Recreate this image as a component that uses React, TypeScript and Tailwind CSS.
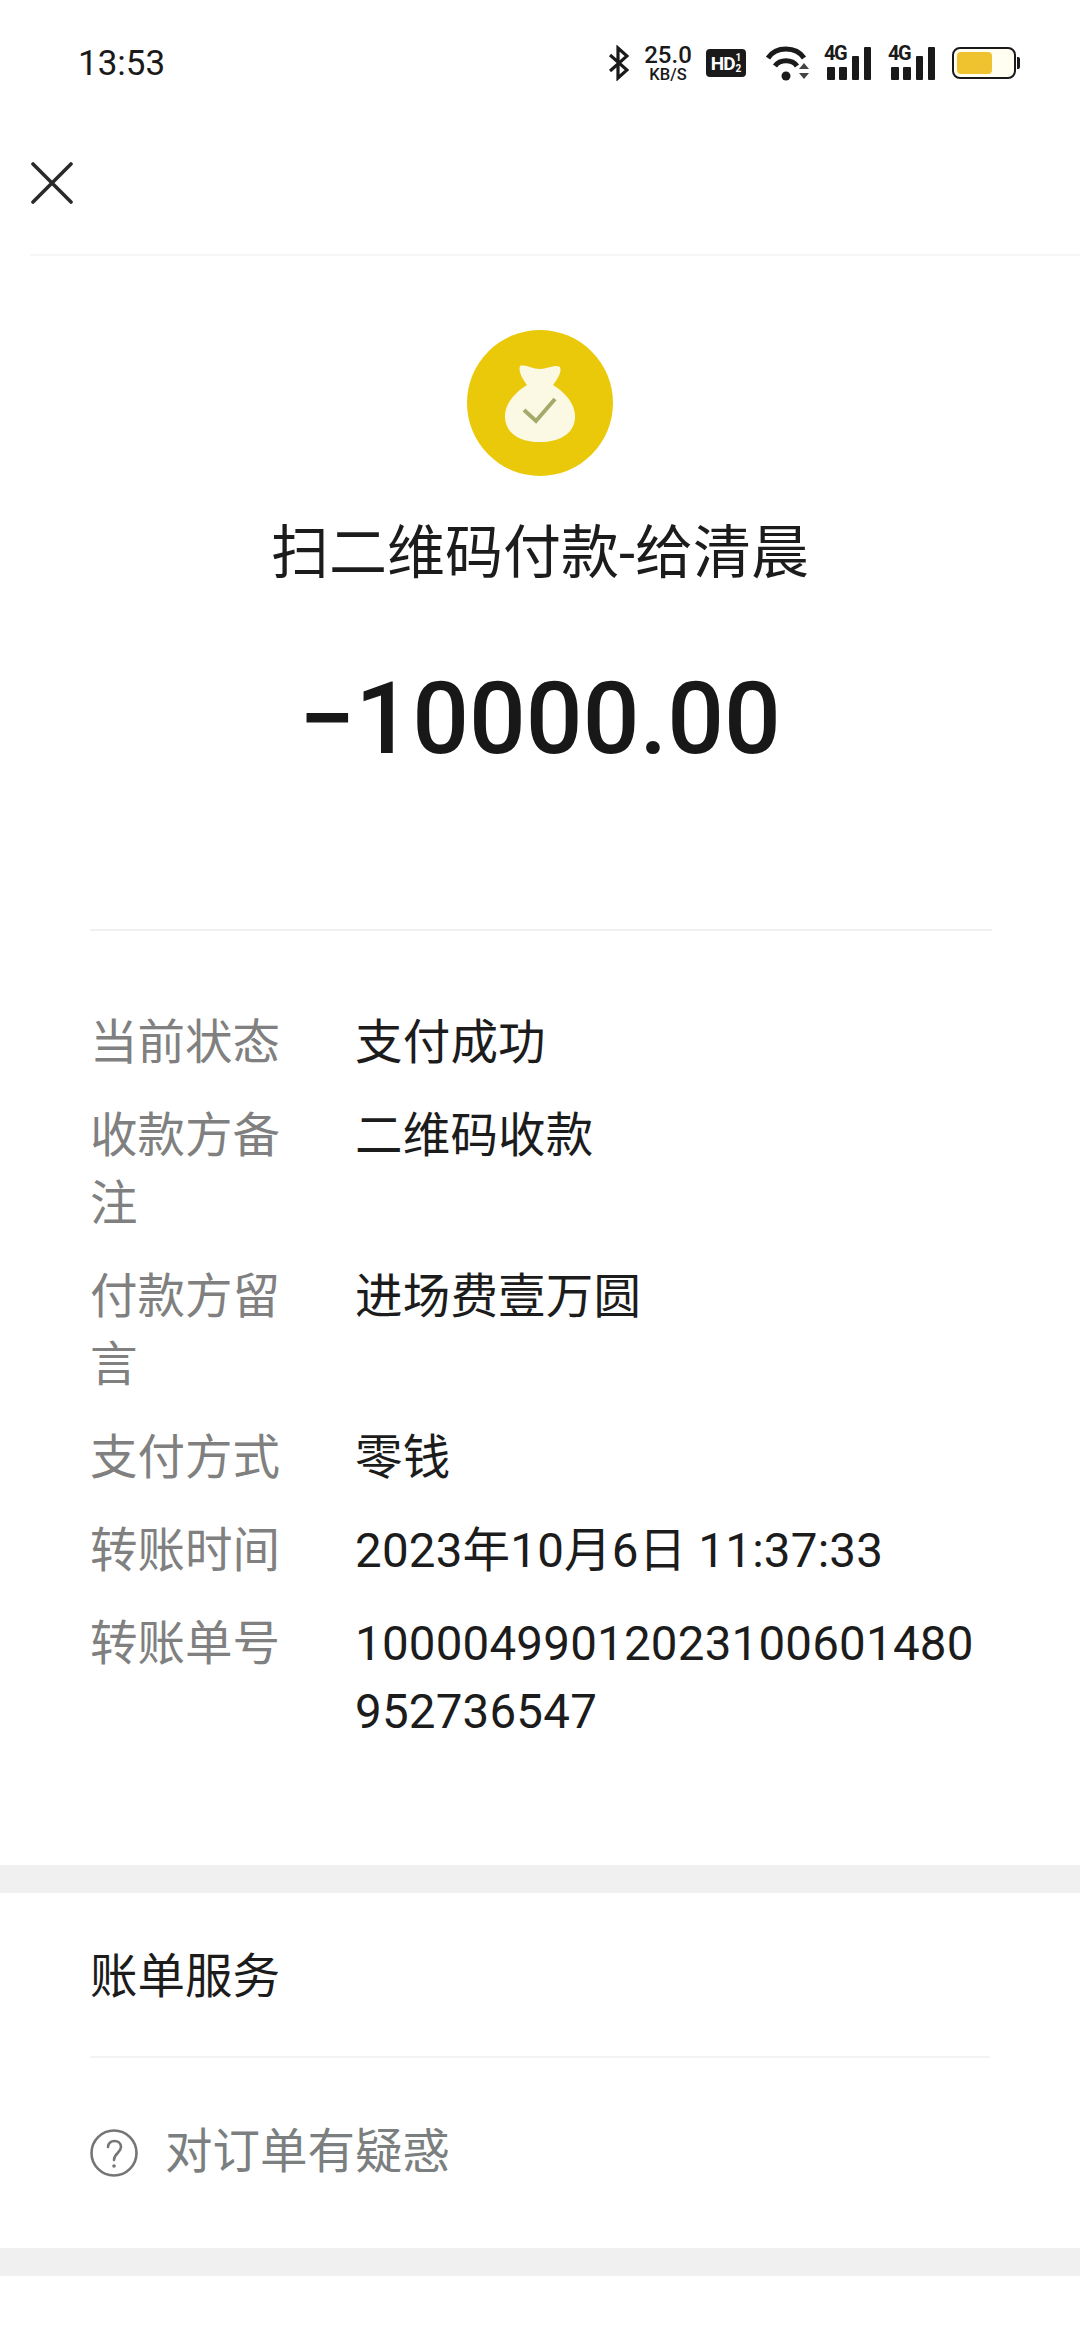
const font = { fontFamily: 'Roboto, "Noto Sans CJK SC", sans-serif' };

const rows = [
  { label: "当前状态", value: "支付成功" },
  { label: "收款方备注", value: "二维码收款" },
  { label: "付款方留言", value: "进场费壹万圆" },
  { label: "支付方式", value: "零钱" },
  { label: "转账时间", value: "2023年10月6日 11:37:33" },
  { label: "转账单号", value: "10000499012023100601480952736547" },
];

function Signal() {
  return (
    <div className="relative h-[34px] w-[47px]">
      <span className="absolute left-0 top-[-4px] text-[20px] leading-[22px] font-bold tracking-[-1.5px] text-[#1a1a1a]">4G</span>
      <svg className="absolute left-0 top-0" width="47" height="34" viewBox="0 0 47 34" fill="#1a1a1a">
        <rect x="3" y="21" width="8" height="13" rx="1" />
        <rect x="15" y="21" width="8" height="13" rx="1" />
        <rect x="28" y="10" width="7" height="24" rx="1" />
        <rect x="40" y="1" width="7" height="33" rx="1" />
      </svg>
    </div>
  );
}

function StatusBar() {
  return (
    <div className="flex h-[126px] items-center justify-between pl-[78px] pr-[60px] text-[#1a1a1a]">
      <span className="text-[35px] leading-none">13:53</span>
      <div className="flex items-center">
        <svg width="20" height="36" viewBox="0 0 20 36" fill="none" stroke="#1a1a1a" strokeWidth="3.2">
          <path d="M1 10 L18 25 L9 33 L9 3 L18 11 L1 26" />
        </svg>
        <div className="ml-[15px] flex w-[48px] flex-col items-center">
          <span className="text-[24px] leading-[23px] font-medium">25.0</span>
          <span className="text-[16.5px] leading-[15px] font-medium">KB/S</span>
        </div>
        <div className="ml-[14px] flex h-[28px] w-[40px] items-center justify-center gap-[1px] rounded-[4px] bg-[#1a1a1a] text-white">
          <span className="text-[19px] leading-none font-bold tracking-[-1px]">HD</span>
          <span className="flex flex-col text-[10px] leading-[11px] font-bold">
            <span>1</span>
            <span>2</span>
          </span>
        </div>
        <svg className="ml-[20px]" width="43" height="36" viewBox="0 0 43 36" fill="none" stroke="#1a1a1a" strokeWidth="5">
          <path d="M2 13 C10 1 30 1 38 13" />
          <path d="M9 21 C14 14 26 14 31 21" />
          <circle cx="20" cy="31" r="4.5" fill="#1a1a1a" stroke="none" />
          <path d="M33 24 L43 24 L38 18 Z M33 28 L43 28 L38 34 Z" fill="#444" stroke="none" />
        </svg>
        <div className="ml-[15px]">
          <Signal />
        </div>
        <div className="ml-[17px]">
          <Signal />
        </div>
        <div className="ml-[17px] flex items-center">
          <div className="h-[32px] w-[64px] rounded-[8px] border-[2px] border-[#1a1a1a] bg-[#fffef0] p-[3px]">
            <div className="h-full w-[35px] rounded-[4px] bg-[#efc22f]" />
          </div>
          <div className="ml-[1px] h-[12px] w-[3px] rounded-r-[2px] bg-[#1a1a1a]" />
        </div>
      </div>
    </div>
  );
}

function CoinIcon() {
  return (
    <div className="flex h-[146px] w-[146px] items-center justify-center rounded-full bg-[#eac90b]">
      <svg width="72" height="80" viewBox="0 0 72 80">
        <path
          d="M16 3 C22 1 27 6 36 6 C44 6 50 1 56 4 C58 8 54 16 49 22 C62 30 72 42 71 55 C70 71 55 79 36 79 C17 79 2 71 1 55 C0 42 10 30 23 22 C19 16 14 9 16 3 Z"
          fill="#fbf9e4"
        />
        <path d="M20 47 L32 58 L51 36" fill="none" stroke="#a3ab6b" strokeWidth="4" />
      </svg>
    </div>
  );
}

export default function App() {
  return (
    <div className="min-h-[2340px] w-[1080px] bg-white" style={font}>
      <StatusBar />
      <div className="flex h-[128px] items-center pb-[14px] pl-[31px]">
        <svg width="42" height="42" viewBox="0 0 42 42" fill="none" stroke="#2a2a2a" strokeWidth="3.6" strokeLinecap="round">
          <path d="M2 2 L40 40 M40 2 L2 40" />
        </svg>
      </div>
      <div className="ml-[30px] h-[2px] bg-[#f6f6f6]" />

      <section className="flex flex-col items-center pt-[74px]">
        <CoinIcon />
        <h1 className="mt-[43px] text-[58px] leading-[68px] font-normal text-[#1c1c1c]">扫二维码付款-给清晨</h1>
        <p className="mt-[72px] text-[100px] leading-[120px] font-medium text-[#181818]">−10000.00</p>
      </section>

      <section className="mt-[150px] px-[90px]">
        <div className="h-[2px] w-[902px] bg-[#f1f1f1]" />
        <dl className="flex flex-col gap-[25px] pt-[78px] text-[47.5px] leading-[68px]">
          {rows.map((row) => (
            <div key={row.label} className="flex">
              <dt className="w-[192px] shrink-0 text-[#808080]">{row.label}</dt>
              <dd className="ml-[73px] w-[640px] break-all tracking-[0.2px] text-[#1c1c1c]">{row.value}</dd>
            </div>
          ))}
        </dl>
      </section>

      <div className="mt-[119px] h-[28px] bg-[#f0f0f0]" />

      <section className="px-[90px]">
        <div className="flex h-[165px] items-center border-b-2 border-[#f3f3f3] pt-[6px] text-[47.5px] text-[#1c1c1c]">账单服务</div>
        <div className="flex h-[190px] items-center">
          <svg width="48" height="48" viewBox="0 0 48 48" fill="none" stroke="#757575" strokeWidth="2.6">
            <circle cx="24" cy="24" r="22.5" />
            <path d="M18 18 C18 10 31 10 31 18 C31 24 24 24 24 31" strokeLinecap="round" />
            <circle cx="24" cy="37" r="1.8" fill="#757575" stroke="none" />
          </svg>
          <span className="ml-[27px] text-[47.5px] text-[#7b7f7f]">对订单有疑惑</span>
        </div>
      </section>

      <div className="h-[28px] bg-[#f0f0f0]" />
    </div>
  );
}
